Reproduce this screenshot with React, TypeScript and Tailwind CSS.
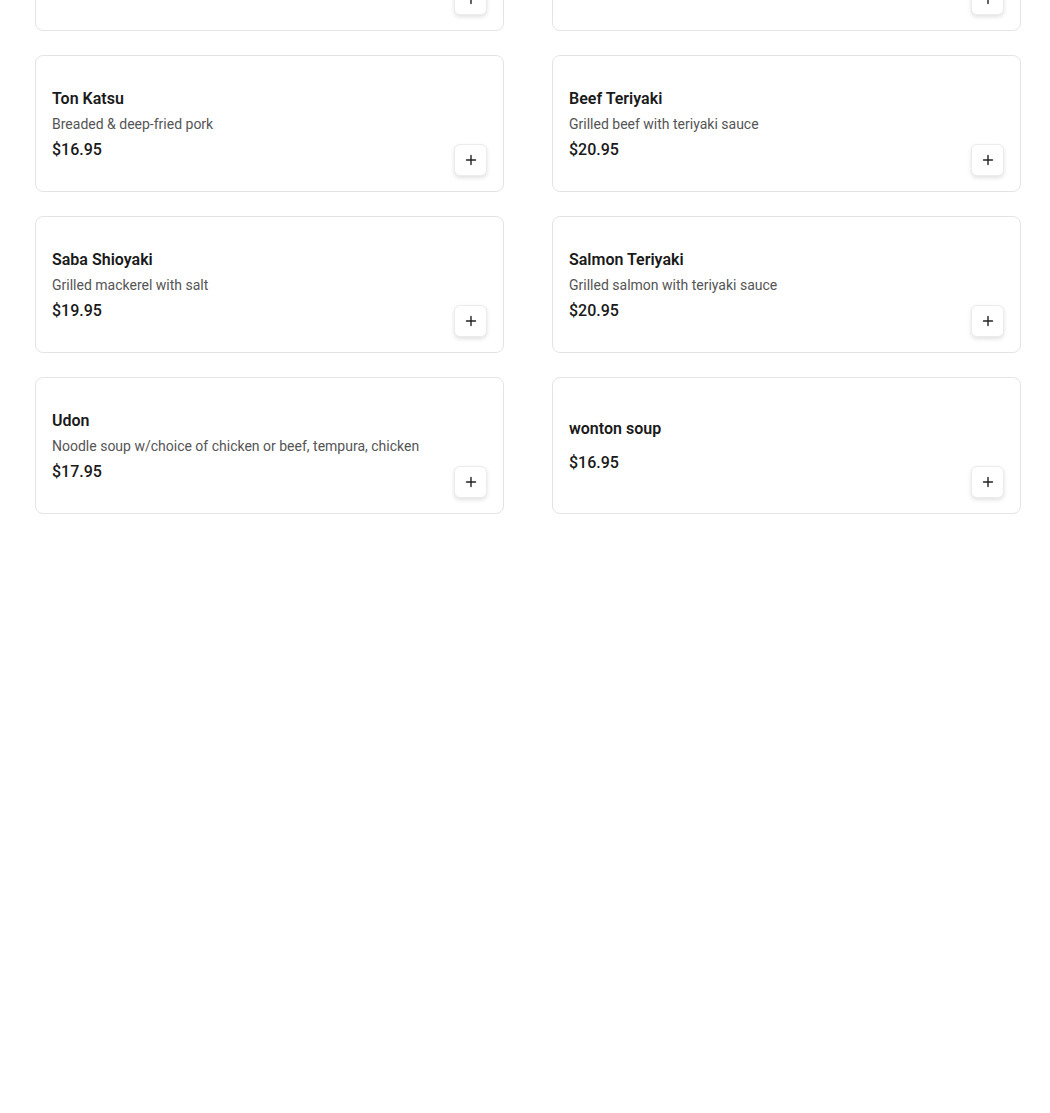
import React from "react";

type Item = { name: string; desc?: string; price: string };

const items: Item[] = [
  { name: "Chicken Teriyaki", desc: "Grilled chicken with teriyaki sauce", price: "$18.95" },
  { name: "Shrimp Tempura", desc: "Deep-fried shrimp & vegetables", price: "$19.95" },
  { name: "Ton Katsu", desc: "Breaded & deep-fried pork", price: "$16.95" },
  { name: "Beef Teriyaki", desc: "Grilled beef with teriyaki sauce", price: "$20.95" },
  { name: "Saba Shioyaki", desc: "Grilled mackerel with salt", price: "$19.95" },
  { name: "Salmon Teriyaki", desc: "Grilled salmon with teriyaki sauce", price: "$20.95" },
  { name: "Udon", desc: "Noodle soup w/choice of chicken or beef, tempura, chicken", price: "$17.95" },
  { name: "wonton soup", price: "$16.95" },
];

function PlusIcon() {
  return (
    <svg width="12" height="12" viewBox="0 0 12 12" fill="none">
      <path d="M6 1.5v9M1.5 6h9" stroke="#222" strokeWidth="1.4" strokeLinecap="round" />
    </svg>
  );
}

function Card({ item }: { item: Item }) {
  return (
    <div className="h-[137px] rounded-lg border border-[#e4e4e4] bg-white flex items-stretch px-4 pb-[15px]">
      <div
        className={
          item.desc
            ? "flex-1 flex flex-col justify-center pt-[17px]"
            : "flex-1 flex flex-col justify-center pt-[17px] pb-[2px]"
        }
      >
        <div className="text-[16px] leading-6 font-semibold text-[#1a1a1a]">{item.name}</div>
        {item.desc ? (
          <div className="mt-[3px] mb-1 text-[14px] leading-5 text-[#555555]">{item.desc}</div>
        ) : (
          <div className="h-[10px]" />
        )}
        <div className="text-[16px] leading-6 font-medium text-[#1a1a1a]">{item.price}</div>
      </div>
      <div className="flex items-end">
        <button className="w-[33px] h-[32px] rounded-md bg-white border border-[#ececec] shadow-[0_2px_4px_rgba(0,0,0,0.12)] flex items-center justify-center">
          <PlusIcon />
        </button>
      </div>
    </div>
  );
}

export default function App() {
  return (
    <div
      className="min-h-[1113px] bg-white overflow-hidden"
      style={{ fontFamily: "Roboto, 'Noto Sans', sans-serif" }}
    >
      <div className="mt-[-106px] pl-[35px] w-[1021px] grid grid-cols-2 gap-x-[48px] gap-y-[24px]">
        {items.map((it) => (
          <Card key={it.name} item={it} />
        ))}
      </div>
    </div>
  );
}
